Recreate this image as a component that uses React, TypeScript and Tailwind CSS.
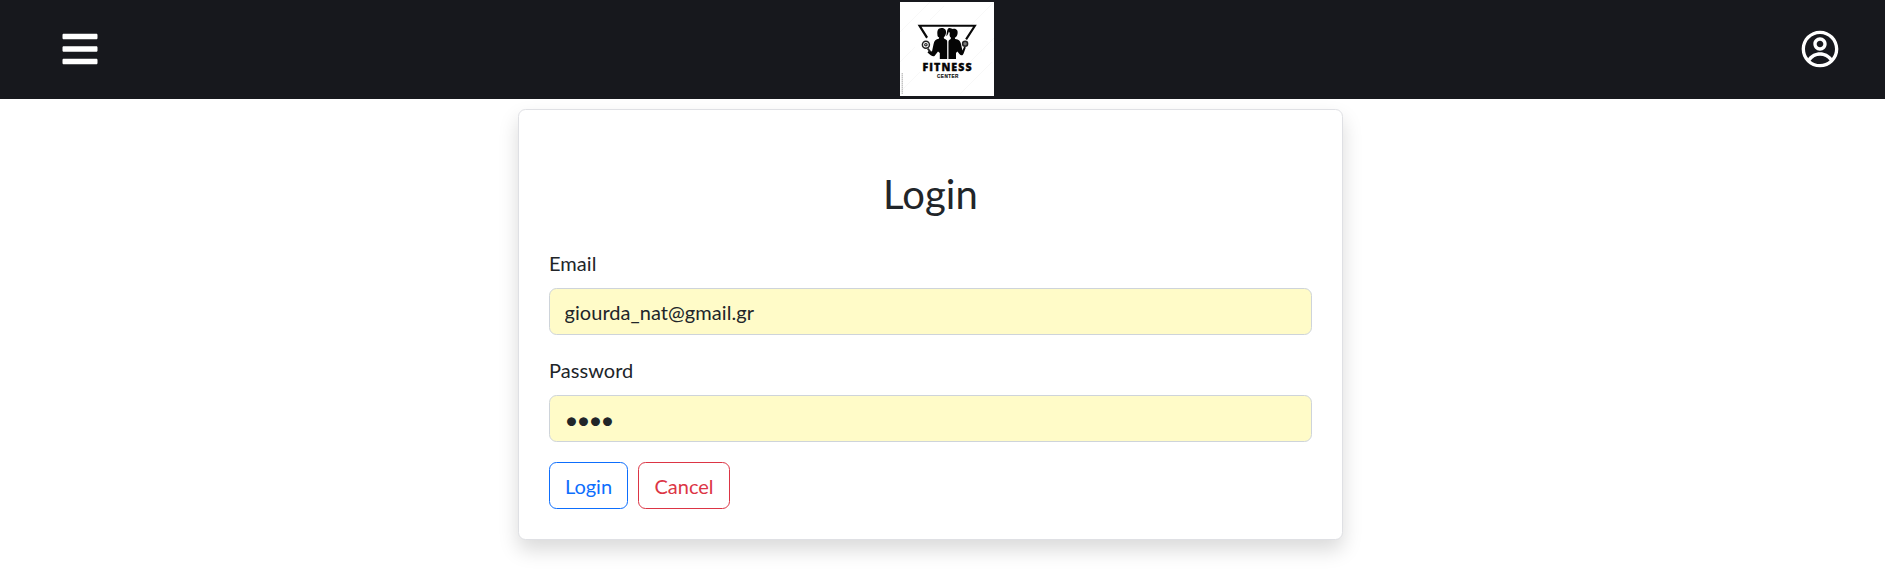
import { FaBars } from "react-icons/fa";
import { CgProfile } from "react-icons/cg";

function Logo() {
  return (
    <svg viewBox="0 0 94 94" className="size-[94px] bg-white" role="img" aria-label="Fitness Center">
      <g stroke="#f8f8f8" strokeWidth="1">
        <path d="M0 30L30 0M0 60L15 45M64 30L94 0M70 60L94 36M0 90L20 70M60 92L92 60M30 18L44 4" />
      </g>
      <path d="M17.6 22.7H76.8L67 38L65.2 36.8L73 24.8H21.5L28 35L26.2 36.4Z" fill="#080808" />
      <g fill="#050505">
        <path d="M37.4 32.2C37 28.6 38 26.2 41.4 26C45 25.8 46.5 28.4 46 31C45.7 33 45 34.2 43.8 35.2L44 36.6C46.2 37.4 47.4 38.5 47.4 40V57H39.8V51L38 49.5L34.5 54C33 55 30.5 53.5 27.5 50.5L29 48.5L32 49.5L33.6 42C34.2 38.6 36 37.2 38.8 36.8L39.2 35.5C38 35 37.3 34 37.4 32.2Z" />
        <path d="M48.8 26C51 25.4 52 27.4 53.6 26.8C57 26.6 58.2 29 57.5 32C57 34.3 56 35.2 54.8 35.8L55.2 37C59 37.3 60.3 39 61 42L62.4 48.5L64.2 44.6L65.8 45.4L63.6 51.5C62.6 53.8 61 54 59.4 52L57.4 49.5L56 51V57H48.3V40C48.3 38.5 49.5 37.5 50.8 37V35.5C49.5 34.5 49.3 32.8 49.8 31L48.8 29.5C48.5 31.5 47.5 33.5 46.3 34.2C47 32 46.5 27.5 48.8 26Z" />
      </g>
      <path d="M47.8 37V57" stroke="#fff" strokeWidth=".8" />
      <g fill="#fff" stroke="#222">
        <circle cx="25.9" cy="42.7" r="3.5" strokeWidth="1.5" />
        <circle cx="25.9" cy="42.7" r="1.2" strokeWidth="1.2" />
        <path d="M27.8 46.6L30.5 50" strokeWidth="1.8" />
        <circle cx="65.1" cy="41.8" r="2.5" strokeWidth="1.5" fill="#777" />
      </g>
      <text x="22.5" y="69.2" textLength="49" lengthAdjust="spacing" fill="#050505" stroke="#050505" strokeWidth=".35" className="font-['Open_Sans',sans-serif] text-[10.6px] font-extrabold">FITNESS</text>
      <text x="37" y="75.9" textLength="21.4" lengthAdjust="spacing" fill="#111" stroke="#111" strokeWidth=".15" className="font-['Liberation_Sans',sans-serif] text-[4.6px] font-bold">CENTER</text>
      <path d="M2.2 71V92" stroke="#aaa" strokeWidth="1" strokeDasharray="1.5 .5" />
    </svg>
  );
}

function Header() {
  return (
    <header className="flex h-[99px] items-center justify-between bg-[#17181d] pr-[45px] pb-px pl-[60px] text-white">
      <button type="button" aria-label="Menu" className="w-10">
        <FaBars size={40} />
      </button>
      <div className="mr-[6px]">
        <Logo />
      </div>
      <button type="button" aria-label="Account" className="w-10">
        <CgProfile size={40} />
      </button>
    </header>
  );
}

type FieldProps = { id: string; label: string; type: string; value: string; inputStyle: string };

function Field({ id, label, type, value, inputStyle }: FieldProps) {
  return (
    <div className="mb-5">
      <label htmlFor={id} className="mb-2.5 block tracking-[0.05px]">{label}</label>
      <input
        id={id}
        type={type}
        defaultValue={value}
        autoComplete="off"
        className={`block h-[47px] w-full rounded-[7.5px] border border-[#ced4da] bg-[#fffbc8] px-[14.5px] outline-none ${inputStyle}`}
      />
    </div>
  );
}

export default function App() {
  return (
    <div className="h-[577px] overflow-hidden bg-white font-['Lato',sans-serif] text-[20px] leading-[30px] text-[#212529]">
      <div className="relative z-10">
        <Header />
      </div>
      <main className="mt-[10px] ml-[518px] h-[431px] w-[825px] rounded-[7.5px] border border-[#dfe0e4] bg-white px-[30px] pt-[60px] shadow-[0_10px_20px_rgba(0,0,0,0.15)]">
        <h2 className="mb-[30px] text-center text-[40px] leading-[48px] tracking-[0.15px]">Login</h2>
        <form onSubmit={(e) => e.preventDefault()}>
          <Field id="email" label="Email" type="text" value="giourda_nat@gmail.gr" inputStyle="py-[7.5px] tracking-[0.05px]" />
          <Field id="password" label="Password" type="password" value="1234" inputStyle="pt-[7px] pb-[6px] text-[24px] tracking-[-1.95px]" />
          <div className="flex gap-[10px]">
            <button type="submit" className="h-[47px] w-[79px] rounded-[7.5px] border border-[#0d6efd] text-[#0d6efd]">Login</button>
            <button type="button" className="h-[47px] w-[92px] rounded-[7.5px] border border-[#dc3545] text-[#dc3545]">Cancel</button>
          </div>
        </form>
      </main>
    </div>
  );
}
